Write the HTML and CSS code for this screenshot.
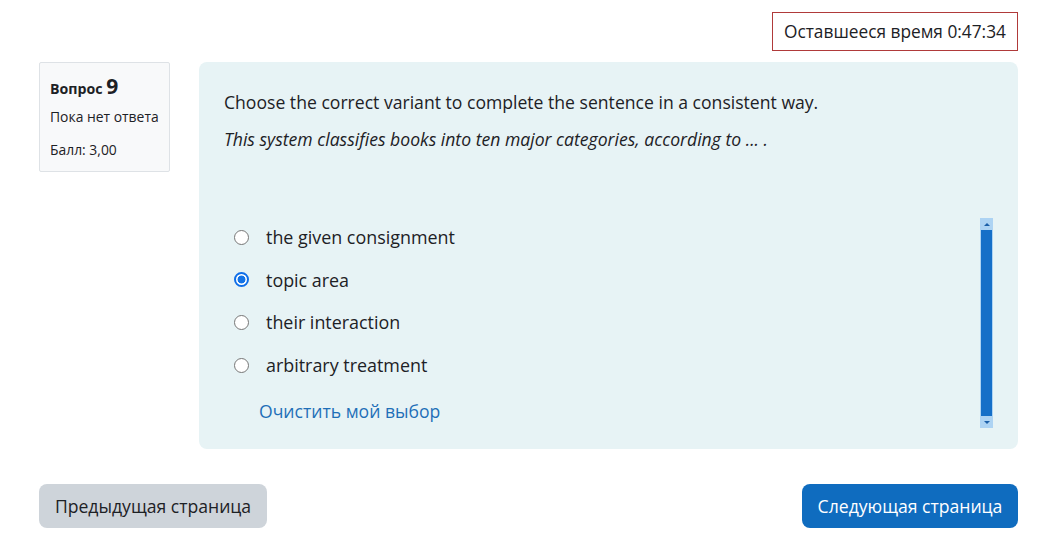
FILE: index.html
```html
<!DOCTYPE html>
<html lang="ru">
<head>
<meta charset="utf-8">
<link rel="stylesheet" href="styles.css">
</head>
<body>
<div class="page">
  <div class="timer-row">
    <div class="timer">Оставшееся время 0:47:34</div>
  </div>
  <div class="question">
    <div class="info">
      <h3 class="qno">Вопрос <span class="num">9</span></h3>
      <div class="state">Пока нет ответа</div>
      <div class="grade">Балл: 3,00</div>
    </div>
    <div class="content">
      <div class="qtext">
        <p>Choose the correct variant to complete the sentence in a consistent way.</p>
        <p class="ital">This system classifies books into ten major categories, according to ... .</p>
      </div>
      <div class="ablock">
        <div class="answers">
          <label class="opt"><span class="radio"></span>the given consignment</label>
          <label class="opt"><span class="radio checked"></span>topic area</label>
          <label class="opt"><span class="radio"></span>their interaction</label>
          <label class="opt"><span class="radio"></span>arbitrary treatment</label>
          <a class="clear" href="#">Очистить мой выбор</a>
        </div>
        <div class="scrollbar">
          <span class="arrow up"></span>
          <span class="thumb"></span>
          <span class="arrow down"></span>
        </div>
      </div>
    </div>
  </div>
  <div class="nav">
    <button class="btn prev">Предыдущая страница</button>
    <button class="btn next">Следующая страница</button>
  </div>
</div>
</body>
</html>
```

FILE: styles.css
```css
* { box-sizing: border-box; }
html, body { margin: 0; padding: 0; background: #fff; }
body {
  font-family: "Open Sans", "Noto Sans", sans-serif;
  color: #1d2125;
  font-size: 15px;
}
.page {
  width: 1048px;
  padding: 12px 30px 0 39px;
}
.timer-row {
  display: flex;
  justify-content: flex-end;
}
.timer {
  border: 1px solid #b03a3a;
  height: 39px;
  width: 246px;
  padding: 0 0 0 11px;
  display: flex;
  align-items: center;
  font-size: 17.3px;
  color: #1d2125;
}
.question {
  display: flex;
  gap: 29px;
  margin-top: 11px;
}
.info {
  width: 131px;
  height: 110px;
  flex: none;
  background: #f8f9fa;
  border: 1px solid #dee2e6;
  border-radius: 2px;
  padding: 10px 10px;
}
.qno {
  margin: 0;
  font-size: 14.2px;
  font-weight: 700;
  line-height: 26px;
}
.num { font-size: 21px; }
.state, .grade {
  font-size: 13.9px;
  line-height: 20px;
}
.state { margin-top: 5px; }
.grade { margin-top: 13px; }
.content {
  flex: 1;
  background: #e7f3f5;
  border-radius: 8px;
  height: 387px;
  padding: 28px 24px 0 25px;
}
.qtext p {
  margin: 0 0 13px 0;
  font-size: 17.6px;
  line-height: 24px;
}
.ital { font-style: italic; }
.ablock {
  display: flex;
  margin-top: 67px;
}
.answers {
  flex: 1;
  display: flex;
  flex-direction: column;
  margin-top: -2px;
}
.opt {
  display: flex;
  align-items: center;
  height: 42.6px;
  font-size: 17.9px;
  padding-left: 10px;
}
.radio {
  width: 15px;
  height: 15px;
  border-radius: 50%;
  border: 1px solid #767676;
  background: #fff;
  margin-right: 17px;
  flex: none;
}
.radio.checked {
  border: 2px solid #0f6ee8;
  background: radial-gradient(circle, #1473e6 0 3.6px, #fff 4.3px);
}
.clear {
  color: #1f6fb8;
  text-decoration: none;
  font-size: 17.6px;
  margin: 13px 0 0 35px;
  line-height: 24px;
}
.scrollbar {
  width: 13px;
  height: 210px;
  background: #add3f3;
  display: flex;
  flex-direction: column;
  align-items: center;
  margin-right: 1px;
}
.arrow {
  width: 0;
  height: 0;
  border-left: 3px solid transparent;
  border-right: 3px solid transparent;
  margin: 5px 0 4px;
}
.arrow.up { border-bottom: 3px solid #1b5fa8; }
.arrow.down { border-top: 3px solid #1b5fa8; margin: 5px 0 4px; }
.thumb {
  width: 11px;
  flex: 1;
  background: #156fc8;
}
.nav {
  display: flex;
  justify-content: space-between;
  margin-top: 35px;
}
.btn {
  font-family: "Open Sans", "Noto Sans", sans-serif;
  font-size: 17.6px;
  border: none;
  border-radius: 8px;
  height: 44px;
  padding: 0;
  white-space: nowrap;
  text-align: center;
}
.prev { background: #ced4da; color: #1d2125; width: 228px; }
.next { background: #0f6cbf; color: #fff; width: 216px; }
```
